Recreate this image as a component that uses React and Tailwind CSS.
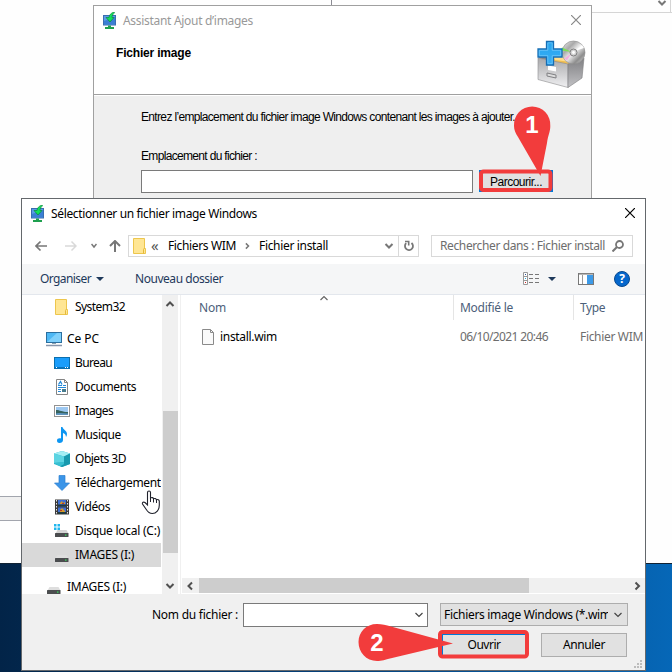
import { useLayoutEffect, useRef } from "react";

/* Text run that is tracked so that it spans exactly `w` pixels. */
function T({ w, className = "", children }) {
  const ref = useRef(null);
  useLayoutEffect(() => {
    const el = ref.current;
    const fit = () => {
      el.style.letterSpacing = "0px";
      const natural = el.getBoundingClientRect().width;
      el.style.letterSpacing = (w - natural) / el.textContent.length + "px";
    };
    fit();
    document.fonts.ready.then(fit);
  }, [w]);
  return (
    <span ref={ref} className={"inline-block shrink-0 whitespace-pre " + className}>
      {children}
    </span>
  );
}

function WdsIcon() {
  return (
    <svg width="16" height="18" viewBox="0 0 16 18" className="shrink-0">
      <rect x="1" y="3" width="13" height="10.500" fill="#3a6db0" />
      <rect x="2" y="4" width="11" height="8.500" fill="#5b9be6" />
      <path d="M2 9l11-4v7.500H2z" fill="#3b7fd4" />
      <path d="M6 13.500h3V15h3v2H3v-2h3z" fill="#1fa04f" />
      <path d="M12 0C9 1 7 3 7 5.500H4L8 10l4-4.500h-2C10 3.500 10.800 2 12.500 1z" fill="#12e05c" stroke="#0c8a3c" strokeWidth=".7" />
    </svg>
  );
}

function Chevron({ dir = "down", className = "", thin = false }) {
  const d = {
    down: "M1.500 3L5 6.500 8.500 3",
    up: "M1.500 7L5 3.500 8.500 7",
    left: "M7 1.500L3.500 5 7 8.500",
    right: "M3.500 1.500L7 5 3.500 8.500",
  }[dir];
  return (
    <svg width="10" height="10" viewBox="0 0 10 10" className={"shrink-0 " + className}>
      <path d={d} fill="none" stroke="currentColor" strokeWidth={thin ? 1.2 : 2} />
    </svg>
  );
}

function Cross({ className }) {
  return (
    <svg width="10" height="10" viewBox="0 0 10 10" className={"shrink-0 " + className}>
      <path d="M0 0L10 10M10 0L0 10" stroke="currentColor" strokeWidth="1.200" />
    </svg>
  );
}

function Folder() {
  return (
    <svg width="16" height="16" viewBox="0 0 16 16" className="shrink-0">
      <path d="M1.500.5h11v10h1v5h-12z" fill="#ffe694" stroke="#edc64d" />
      <path d="M11.500 15.500v-4l1-1.500" fill="none" stroke="#e5b93a" />
    </svg>
  );
}

function Drive({ win }) {
  return (
    <svg width="16" height="16" viewBox="0 0 16 16" className="shrink-0">
      {win && <path d="M0 0h2.500v2.500H0zM3.500 0H6v2.500H3.500zM0 3.500h2.500V6H0zM3.500 3.500H6V6H3.500z" fill="#1fb6ee" />}
      <path d="M3.500 6h9l2 3.500h-13z" fill={win ? "#d4d4d4" : "#dedede"} />
      <rect x="1" y="9" width="13.500" height="4" rx=".5" fill="#4b4d4f" />
      <rect x="11" y="10.500" width="1.500" height="1.200" fill="#38e05e" />
    </svg>
  );
}

const icons = {
  folder: <Folder />,
  drive: <div className="translate-y-[2px]"><Drive /></div>,
  windrive: <div className="translate-y-[1px]"><Drive win /></div>,
  pc: (
    <svg width="16" height="16" viewBox="0 0 16 16">
      <rect x=".5" y="1.500" width="15" height="10" fill="#4db8f5" stroke="#2b6f9f" />
      <path d="M1 11L11 2h4v9z" fill="#7fd0fb" />
      <path d="M6 12h4v1H6z" fill="#8aa0b0" />
      <path d="M0 14.500h16" stroke="#8795ab" strokeWidth="1.500" />
    </svg>
  ),
  desktop: (
    <svg width="16" height="16" viewBox="0 0 16 16">
      <rect x=".5" y="2.500" width="15" height="11" fill="#1a9dfb" stroke="#0b6fae" />
      <path d="M1 12.500h14" stroke="#0873bd" />
      <path d="M2 12.500h1M11 12.500h1M13 12.500h1" stroke="#fff" />
    </svg>
  ),
  docs: (
    <svg width="16" height="16" viewBox="0 0 16 16">
      <path d="M2.500.5h8l3 3v12h-11z" fill="#fff" stroke="#858585" />
      <path d="M10.500.5v3h3" fill="none" stroke="#858585" />
      <path d="M4 6.500h4M9 6.500h3M4 8.500h8M4 10.500h3M4 12.500h3" stroke="#2489d8" />
      <path d="M4.500 5.500l2-3 1.500 3" fill="none" stroke="#2489d8" strokeWidth="1.300" />
      <rect x="8" y="10" width="4" height="3" fill="#477b8d" />
    </svg>
  ),
  images: (
    <svg width="16" height="16" viewBox="0 0 16 16">
      <rect x=".5" y="2.500" width="15" height="11" fill="#fff" stroke="#929292" />
      <rect x="2" y="4" width="12" height="8" fill="#9dc8f1" />
      <path d="M2 7c4 0 6 2 12 2v3H2z" fill="#36635f" />
      <path d="M2 10.500c5-1 8 0 12 0V12H2z" fill="#5d93bd" />
    </svg>
  ),
  music: (
    <svg width="16" height="16" viewBox="0 0 16 16">
      <path d="M7 0h1.500c.5 2.500 4.500 3.500 4.500 7 0 1.200-.5 2.200-1 3 0-2.500-1.500-3.500-3-4v7c0 1.800-1.500 3-3.500 3S3 15 3 13.500 4.500 11 7 11.500z" fill="#0d96f2" />
    </svg>
  ),
  cube: (
    <svg width="16" height="16" viewBox="0 0 16 16">
      <path d="M0 2.500L8 0l8 2.500V13l-8 3-8-3z" fill="#27b6cb" />
      <path d="M0 2.500L8 0l8 2.500-6 3z" fill="#a3eef4" />
      <path d="M10 5.500l6-3V13l-8 3-2-.8 4-2.200z" fill="#1799ae" />
      <path d="M0 2.500l10 3V11L0 12z" fill="#5cd4e2" />
      <path d="M0 12l10-1 0 2-4 2.200z" fill="#38bfd1" />
    </svg>
  ),
  download: (
    <svg width="16" height="16" viewBox="0 0 16 16">
      <path d="M5 .5h6V8h4.500L8 15.500.5 8H5z" fill="#3b95e8" stroke="#2b7fce" strokeWidth=".7" />
    </svg>
  ),
  video: (
    <svg width="16" height="16" viewBox="0 0 16 16">
      <rect x="1" y=".5" width="14" height="15" fill="#3b3b3b" />
      <path d="M2.500 1v14M13.500 1v14" stroke="#e6e6e6" strokeDasharray="1.500 1.500" />
      <path d="M4 1h8v6.500H4zM4 8.500h8V15H4z" fill="#3f6fd1" />
      <path d="M6 4l2-2 1 2 2-1v2H6zM6 11l2-2 3 3v1H6z" fill="#d49a2b" />
      <path d="M8 4h2v1H8zM6 11h2v1H6z" fill="#b4392b" />
      <path d="M4 5.500h8v2H4zM4 13h8v2H4z" fill="#203c40" />
    </svg>
  ),
};

const tree = [
  ["folder", "System32", 50, "pl-8 mb-2"],
  ["pc", "Ce PC", 32, "pl-6"],
  ["desktop", "Bureau", 37, "pl-8"],
  ["docs", "Documents", 61, "pl-8"],
  ["images", "Images", 38, "pl-8"],
  ["music", "Musique", 46, "pl-8"],
  ["cube", "Objets 3D", 51, "pl-8"],
  ["download", "Téléchargements", 91, "pl-8"],
  ["video", "Vidéos", 35, "pl-8"],
  ["windrive", "Disque local (C:)", 85, "pl-8"],
  ["drive", "IMAGES (I:)", 59, "pl-8 mb-2 bg-[#d9d9d9]"],
  ["drive", "IMAGES (I:)", 59, "pl-6"],
];

function Wizard() {
  return (
    <div className="absolute left-[93px] top-[5px] flex h-[210px] w-[499px] flex-col border border-[#a0a0a0] bg-[#efefef] text-[#000]">
      <div className="flex h-[89px] flex-col border-b border-[#a0a0a0] bg-white">
        <div className="flex h-[30px] items-center pl-2 pr-[10px]">
          <WdsIcon />
          <T w={130} className="ml-[5px] text-[12px] text-[#999]">Assistant Ajout d’images</T>
          <Cross className="mb-[2px] ml-auto text-[#888]" />
        </div>
        <div className="flex pl-[22px] pr-[5px]">
          <T w={75} className="mt-[9px] h-4 font-['Liberation_Sans',sans-serif] text-[12px] leading-4 font-bold">Fichier image</T>
          <svg width="52" height="54" viewBox="0 0 52 54" className="ml-auto">
            <defs>
              <linearGradient id="front" x1="0" y1="0" x2="0" y2="1">
                <stop offset="0" stopColor="#a9a9ab" />
                <stop offset="1" stopColor="#f0f0f2" />
              </linearGradient>
              <linearGradient id="side" x1="0" y1="0" x2="0" y2="1">
                <stop offset="0" stopColor="#7f7f82" />
                <stop offset="1" stopColor="#c2c2c5" />
              </linearGradient>
              <linearGradient id="disc" x1="0" y1="0" x2="1" y2="1">
                <stop offset="0" stopColor="#f4f4f4" />
                <stop offset=".3" stopColor="#a9a9a9" />
                <stop offset=".5" stopColor="#f0f0f0" />
                <stop offset=".75" stopColor="#8d8d8d" />
                <stop offset="1" stopColor="#e4e4e4" />
              </linearGradient>
              <linearGradient id="plus" x1="0" y1="0" x2="0" y2="1">
                <stop offset="0" stopColor="#25a4ee" />
                <stop offset="1" stopColor="#38aef5" />
              </linearGradient>
            </defs>
            <path d="M4 22l12-7 27 4 7 5-14 6z" fill="#86868a" />
            <path d="M15 18l17-6 7 12-4 5-16-3z" fill="#f0bd50" />
            <path d="M18 19l15-5 4 12-16-2z" fill="#ffdd8b" />
            <path d="M4 22l30 6v23.500L4 43.500z" fill="url(#front)" stroke="#8b8b8d" strokeWidth=".6" />
            <path d="M34 28l16-6-2 20-14 9.500z" fill="url(#side)" stroke="#7d7d80" strokeWidth=".6" />
            <path d="M14 29.500l8 1.500v4.500L14 34z" fill="#fff" />
            <path d="M13 37l9 2v3l-9-2z" fill="#ddd" stroke="#808083" />
            <ellipse cx="39.500" cy="16.500" rx="11.500" ry="11.500" fill="url(#disc)" stroke="#8b8b8b" strokeWidth=".6" />
            <path d="M38 16l-10-4.500-1 3z" fill="#7fdf56" />
            <path d="M38 17l-8 5.500 3 2z" fill="#efb3df" />
            <path d="M41 15l7-6 2 3z" fill="#fff" />
            <circle cx="39.500" cy="16.500" r="3.500" fill="#d4d4d4" stroke="#808080" />
            <circle cx="39.500" cy="16.500" r="1.400" fill="#fff" />
            <path d="M12.500 5.500h7V13H28v8h-8.500v8h-7v-8H4v-8h8.500z" fill="url(#plus)" stroke="#176eb4" strokeWidth="1.300" />
            <path d="M13.800 6.800h4.400v7.500h8.500v5.400h-8.500v8h-4.400v-8H5.300v-5.400h8.500z" fill="none" stroke="#7accfa" strokeWidth=".7" />
          </svg>
        </div>
      </div>
      <div className="flex flex-col border-t border-white pl-[47px] font-['Liberation_Sans',sans-serif] text-[12px] leading-4">
        <T w={374} className="mt-[13px] self-start">Entrez l’emplacement du fichier image Windows contenant les images à ajouter.</T>
        <T w={116} className="mt-[23px] self-start">Emplacement du fichier :</T>
        <div className="mt-[6px] flex items-start">
          <div className="h-[23px] w-[332px] border border-[#7a7a7a] bg-white" />
          <div className="ml-[6px] flex h-[22px] w-[74px] items-center justify-center border-2 border-[#0078d7] bg-[#e1e1e1] pt-[1px]">
            <T w={52} className="text-[12px]">Parcourir...</T>
          </div>
        </div>
      </div>
    </div>
  );
}

function TitleAndNav() {
  return (
    <>
      <div className="flex h-[29px] items-center pl-2 pr-[10px]">
        <WdsIcon />
        <T w={206} className="ml-[5px] text-[12px] text-black">Sélectionner un fichier image Windows</T>
        <Cross className="mb-[2px] ml-auto text-black" />
      </div>
      <div className="flex h-9 items-center py-[1px] pl-[13px]">
        <svg width="12" height="12" viewBox="0 0 12 12">
          <path d="M12 6H1M5.500 1.500L1 6l4.500 4.500" fill="none" stroke="#777" strokeWidth="1.700" />
        </svg>
        <svg width="12" height="12" viewBox="0 0 12 12" className="ml-[18px]">
          <path d="M0 6h11M6.500 1.500L11 6l-4.500 4.500" fill="none" stroke="#d9d9d9" strokeWidth="1.500" />
        </svg>
        <svg width="6" height="6" viewBox="0 0 6 6" className="ml-[14px]">
          <path d="M.5 1L3 4l2.500-3" fill="none" stroke="#777" strokeWidth="1.500" />
        </svg>
        <svg width="12" height="12" viewBox="0 0 12 12" className="ml-[12px]">
          <path d="M6 12V1M1 6l5-5 5 5" fill="none" stroke="#777" strokeWidth="2" />
        </svg>
        <div className="ml-[7px] flex h-[22px] w-[291px] items-center border border-[#d9d9d9] pl-[3px]">
          <Folder />
          <T w={9} className="mb-[2px] ml-[3px] text-[15px] leading-4 text-[#555]">«</T>
          <T w={68} className="ml-[8px] text-[12px]">Fichiers WIM</T>
          <Chevron dir="right" className="ml-[6px] scale-75 text-[#777]" />
          <T w={69} className="ml-[7px] text-[12px]">Fichier install</T>
          <Chevron className="ml-auto mr-[4px] text-[#777]" />
          <div className="flex h-full w-5 items-center justify-center border-l border-[#d9d9d9]">
            <svg width="12" height="12" viewBox="0 0 12 12">
              <path d="M3.200 3.200a4 4 0 1 0 5.300-.2" fill="none" stroke="#777" strokeWidth="1.800" />
              <path d="M2 1.500h3.700v4" fill="none" stroke="#777" strokeWidth="1.600" />
            </svg>
          </div>
        </div>
        <div className="ml-3 flex h-[22px] w-[202px] items-center border border-[#d9d9d9] pl-2">
          <T w={165} className="text-[12px] text-[#6d6d6d]">Rechercher dans : Fichier install</T>
          <svg width="12" height="12" viewBox="0 0 12 12" className="ml-[7px]">
            <circle cx="7.500" cy="4.500" r="3.500" fill="none" stroke="#777" strokeWidth="1.800" />
            <path d="M5 7L.5 11.500" stroke="#777" strokeWidth="2" />
          </svg>
        </div>
      </div>
    </>
  );
}

function Toolbar() {
  return (
    <div className="flex h-[31px] items-center border-b border-[#e3e7ed] bg-[#f5f6f7] pl-[18px] text-[12px] text-[#1e395b]">
      <T w={51}>Organiser</T>
      <svg width="8" height="4" className="ml-[5px]"><path d="M0 0h8L4 4z" fill="#1e395b" /></svg>
      <T w={88} className="ml-[31px]">Nouveau dossier</T>
      <svg width="16" height="14" viewBox="0 0 16 14" className="ml-[300px]">
        <path d="M.5.5h4v12h-4zM.5 4.500h4M.5 8.500h4" fill="#fff" stroke="#999" />
        <path d="M6 2.500h4M12 2.500h4M6 6.500h4M12 6.500h4M6 10.500h4M12 10.500h4" stroke="#777" />
        <path d="M2 2.500h1" stroke="#359" /><path d="M2 6.500h1" stroke="#28a6d9" /><path d="M2 10.500h1" stroke="#d42222" />
      </svg>
      <svg width="8" height="4" className="ml-[9px]"><path d="M0 0h8L4 4z" fill="#1e395b" /></svg>
      <svg width="16" height="12" viewBox="0 0 16 12" className="ml-[22px]">
        <rect x=".5" y=".5" width="15" height="11" fill="#fff" stroke="#777" />
        <path d="M1 1.200h14" stroke="#999" />
        <path d="M4.500 2v9" stroke="#999" />
        <rect x="9" y="2" width="6" height="9" fill="#3c9ae8" />
      </svg>
      <div className="ml-5 flex size-4 items-center justify-center rounded-full border border-[#07488f] bg-[#0567cc] font-['Open_Sans',sans-serif] text-[12px] leading-none font-bold text-white">?</div>
    </div>
  );
}

function Sidebar() {
  return (
    <div className="flex h-full w-[159px] shrink-0 border-r border-[#f0f0f0]">
      <div className="h-full w-[139px] overflow-hidden">
        {tree.map(([icon, label, w, cls], i) => (
          <div key={i} className={"flex h-6 items-center gap-[5px] text-[12px] text-black " + cls}>
            <span className="block size-4 shrink-0">{icons[icon]}</span>
            <T w={w}>{label}</T>
          </div>
        ))}
      </div>
      <div className="ml-[1px] flex h-full w-4 flex-col items-center bg-[#f0f0f0] pt-1 pb-[3px]">
        <Chevron dir="up" className="text-[#505050]" />
        <div className="mt-[102px] h-[142px] w-[15px] shrink-0 bg-[#cdcdcd]" />
        <Chevron className="mt-auto text-[#505050]" />
      </div>
    </div>
  );
}

function FileList() {
  return (
    <div className="ml-[1px] flex min-w-0 flex-1 flex-col">
      <div className="flex h-[25px] overflow-hidden text-[12px] text-[#4c607a]">
        <div className="flex w-[272px] shrink-0 items-center border-r border-[#e5e5e5] pl-[17px]">
          <T w={27}>Nom</T>
          <Chevron dir="up" thin className="mb-[20px] ml-[93px] text-[#666]" />
        </div>
        <div className="flex w-[120px] shrink-0 items-center border-r border-[#e5e5e5] pl-[6px]"><T w={53}>Modifié le</T></div>
        <div className="flex items-center pl-[6px]"><T w={25}>Type</T></div>
      </div>
      <div className="flex h-[34px] items-center overflow-hidden text-[12px] text-[#6d6d6d]">
        <svg width="12" height="16" viewBox="0 0 12 16" className="ml-[20px] shrink-0">
          <path d="M.5.500h8l3 3v12H.5z" fill="#fafafa" stroke="#8a8a8a" />
          <path d="M8.500.5v3h3" fill="none" stroke="#8a8a8a" />
        </svg>
        <T w={57} className="ml-[6px] text-black">install.wim</T>
        <T w={88} className="ml-[183px]">06/10/2021 20:46</T>
        <T w={63} className="ml-[32px]">Fichier WIM</T>
      </div>
      <div className="mt-auto mb-[1px] flex h-[15px] items-center bg-[#f0f0f0]">
        <Chevron dir="left" className="ml-[3px] text-[#505050]" />
        <div className="ml-[4px] h-[15px] w-[330px] bg-[#cdcdcd]" />
        <Chevron dir="right" className="ml-auto mr-[3px] text-[#505050]" />
      </div>
    </div>
  );
}

function Footer() {
  return (
    <div className="flex h-[76px] flex-col bg-[#f0f0f0] pt-[9px] text-[12px] text-black">
      <div className="flex h-6 items-start">
        <div className="flex h-6 items-center pl-[130px]"><T w={86}>Nom du fichier :</T></div>
        <div className="ml-[5px] flex h-6 w-[185px] items-center justify-end border border-[#7a7a7a] bg-white pr-[3px]">
          <Chevron thin className="text-[#444]" />
        </div>
        <div className="ml-3 flex h-[23px] w-[188px] items-center border border-[#adadad] bg-[#e1e1e1] pl-[3px]">
          <div className="w-[164px] overflow-hidden"><T w={170}>Fichiers image Windows (*.wim)</T></div>
          <Chevron thin className="ml-[5px] text-[#444]" />
        </div>
      </div>
      <div className="mt-[6px] flex h-6">
        <div className="ml-[419px] flex w-[86px] items-center justify-center border-2 border-[#0078d7] bg-[#e1e1e1]"><T w={33}>Ouvrir</T></div>
        <div className="ml-[14px] flex w-[86px] items-center justify-center border border-[#adadad] bg-[#e1e1e1]"><T w={42}>Annuler</T></div>
      </div>
      <svg width="8" height="8" viewBox="0 0 8 8" className="mt-[3px] mr-[3px] self-end">
        <path d="M6 0h2v2H6zM3 3h2v2H3zM6 3h2v2H6zM0 6h2v2H0zM3 6h2v2H3zM6 6h2v2H6z" fill="#bcbcbc" />
      </svg>
    </div>
  );
}

function FileDialog() {
  return (
    <div className="absolute left-[21px] top-[198px] flex h-[473px] w-[625px] flex-col border border-[#64686c] bg-white">
      <TitleAndNav />
      <Toolbar />
      <div className="flex h-[299px]">
        <Sidebar />
        <FileList />
      </div>
      <Footer />
    </div>
  );
}

export default function App() {
  return (
    <div className="relative h-[672px] w-[672px] overflow-hidden bg-[#fefefe] font-['Noto_Sans','Open_Sans',sans-serif]">
      <div className="flex h-full flex-col">
        <div className="flex h-[13px] shrink-0 justify-between border-b border-[#d5d5d5]">
          <div className="w-[332px] border-r border-[#8b8b93]" />
          <div className="mr-[1px] flex items-start border-r border-[#d5d5d5] pr-[3px]">
            <Chevron className="-mt-[2px] text-[#777]" />
          </div>
        </div>
        <div className="-mt-[1px] h-[483px] w-[592px] shrink-0 bg-[#fefefe]" />
        <div className="mt-[1px] h-[25px] w-[30px] shrink-0 border-y border-[#a2a5ad] bg-[#f0f0f0]" />
        <div className="mt-auto h-[109px] shrink-0 border-t border-[#123] bg-linear-to-r from-[#022448] via-[#04417c] to-[#0667b7]" />
      </div>
      <Wizard />
      <FileDialog />
      <svg width="92" height="92" viewBox="0 0 92 92" className="absolute left-[471px] top-[101px]">
        <rect x="10" y="70.500" width="69.500" height="18.500" rx="2.500" fill="none" stroke="#f23c3c" strokeWidth="4" />
        <path d="M43 25a18.200 18.200 0 1 1 36.300 0c0 6-2.300 9-3.300 17L69.500 75 47 36c-2.500-4-4-7-4-11z" fill="#f23c3c" />
      </svg>
      <span className="absolute left-[524px] top-[113px] w-4 text-center font-['Liberation_Sans',sans-serif] text-[24px] leading-6 font-bold text-white">1</span>
      <svg width="180" height="44" viewBox="0 0 180 44" className="absolute left-[355px] top-[621px]">
        <rect x="85" y="11" width="87" height="24.500" rx="2.500" fill="none" stroke="#f23c3c" strokeWidth="4" />
        <path d="M22 3C11 3 3.500 11 3.500 21S11 40 22 40c5 0 8-1.300 14-2.800L98 22.500 36 5.500C31 4 27 3 22 3z" fill="#f23c3c" />
      </svg>
      <span className="absolute left-[369px] top-[631px] w-4 text-center font-['Liberation_Sans',sans-serif] text-[24px] leading-6 font-bold text-white">2</span>
      <svg width="20" height="25" viewBox="0 0 20 25" className="absolute left-[141px] top-[490px]">
        <path d="M6.500 2.500c0-2 3-2 3 0V8c1.500-1 2.800-.3 3 .8 1.200-.7 2.500-.2 2.800.9 1.500-.5 3 .2 3 1.600V15c0 5-3 8.500-7 8.500-3 0-4.500-1.500-6-4L1.500 14c-.5-1.500 1-2.500 2.500-1.500l2.500 2.500z" fill="#fff" stroke="#20222c" strokeWidth="1.100" />
        <path d="M9.500 8v4M12.500 9v3.500M15.500 10v3" stroke="#20222c" />
      </svg>
    </div>
  );
}
